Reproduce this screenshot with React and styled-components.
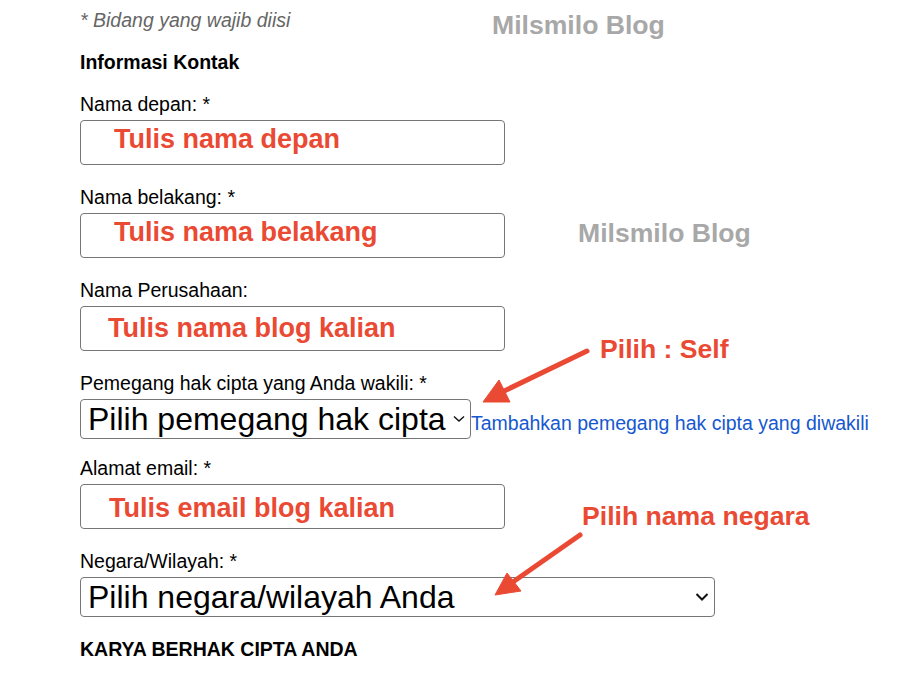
import styled, { createGlobalStyle } from 'styled-components';

const GlobalStyle = createGlobalStyle`
  body {
    margin: 0;
    background: #ffffff;
    font-family: "Liberation Sans", Arial, sans-serif;
    color: #000;
  }
`;

const Page = styled.div`
  position: relative;
  width: 923px;
  height: 678px;
  overflow: hidden;
  box-sizing: border-box;
  padding: 9px 0 0 80px;
`;

const Note = styled.p`
  margin: 0 0 20px;
  font-size: 19.5px;
  line-height: 22px;
  font-style: italic;
  color: #666;
`;

const SectionTitle = styled.h3`
  margin: 0 0 20px;
  font-size: 19.5px;
  line-height: 22px;
  font-weight: bold;
`;

const Field = styled.div`
  margin-bottom: ${(props) => props.gap || 21}px;
`;

const Label = styled.label`
  display: block;
  font-size: 19.5px;
  line-height: 22px;
  margin-bottom: 5px;
`;

// shift: vertical offset of the hand-written hint inside the box
const TextBox = styled.input`
  display: block;
  box-sizing: border-box;
  width: 425px;
  height: 45px;
  margin: 0;
  padding: ${(p) => Math.max(0, p.shift * 2)}px 0 ${(p) => Math.max(0, -p.shift * 2)}px ${(p) => p.indent}px;
  border: 1px solid #767676;
  border-radius: 4px;
  background: #fff;
  font-family: "Liberation Sans", Arial, sans-serif;
  font-size: 27px;
  font-weight: bold;
  color: #ea4a33;
  outline: none;
`;

const SelectRow = styled.div`
  display: flex;
  align-items: baseline;
`;

const SelectWrap = styled.div`
  position: relative;
  width: ${(props) => props.width}px;
`;

const Select = styled.select`
  appearance: none;
  -webkit-appearance: none;
  display: block;
  box-sizing: border-box;
  width: 100%;
  height: 40px;
  margin: 0;
  padding: 0 14px 0 7px;
  border: 1px solid #767676;
  border-radius: 4px;
  background: #fff;
  font-family: "Liberation Sans", Arial, sans-serif;
  font-size: 32px;
  color: #000;
`;

const Chevron = styled.svg`
  position: absolute;
  top: 50%;
  right: ${(props) => props.right}px;
  transform: translateY(-50%);
  pointer-events: none;
`;

const Link = styled.a`
  font-size: 19.5px;
  line-height: 22px;
  color: #1558cf;
  text-decoration: none;
  white-space: nowrap;
`;

const Callout = styled.span`
  position: absolute;
  left: ${(props) => props.x}px;
  top: ${(props) => props.y}px;
  font-size: 26.6px;
  line-height: 1;
  font-weight: bold;
  white-space: nowrap;
  color: ${(props) => (props.watermark ? '#a8a8a8' : '#ea4a33')};
`;

const Overlay = styled.svg`
  position: absolute;
  left: 0;
  top: 0;
  pointer-events: none;
`;

function SelectBox({ width, chevronRight, small, children }) {
  return (
    <SelectWrap width={width}>
      <Select defaultValue="">
        <option value="">{children}</option>
      </Select>
      {small ? (
        <Chevron width="12" height="7" viewBox="0 0 12 7" right={chevronRight}>
          <polyline points="1,1 6,5.5 11,1" fill="none" stroke="#111" strokeWidth="1.4" />
        </Chevron>
      ) : (
        <Chevron width="14" height="9" viewBox="0 0 14 9" right={chevronRight}>
          <polyline points="1.5,1.5 7,7 12.5,1.5" fill="none" stroke="#111" strokeWidth="2" />
        </Chevron>
      )}
    </SelectWrap>
  );
}

function App() {
  return (
    <>
      <GlobalStyle />
      <Page>
        <Note>* Bidang yang wajib diisi</Note>
        <SectionTitle>Informasi Kontak</SectionTitle>

        <Field>
          <Label>Nama depan: *</Label>
          <TextBox readOnly indent={33} shift={-3} value="Tulis nama depan" />
        </Field>
        <Field>
          <Label>Nama belakang: *</Label>
          <TextBox readOnly indent={33} shift={-3.5} value="Tulis nama belakang" />
        </Field>
        <Field>
          <Label>Nama Perusahaan:</Label>
          <TextBox readOnly indent={27} shift={0} value="Tulis nama blog kalian" />
        </Field>
        <Field gap={18}>
          <Label>Pemegang hak cipta yang Anda wakili: *</Label>
          <SelectRow>
            <SelectBox width={391} chevronRight={6} small>
              Pilih pemegang hak cipta
            </SelectBox>
            <Link href="#">Tambahkan pemegang hak cipta yang diwakili</Link>
          </SelectRow>
        </Field>
        <Field>
          <Label>Alamat email: *</Label>
          <TextBox readOnly indent={28} shift={1.5} value="Tulis email blog kalian" />
        </Field>
        <Field>
          <Label>Negara/Wilayah: *</Label>
          <SelectBox width={635} chevronRight={6}>
            Pilih negara/wilayah Anda
          </SelectBox>
        </Field>
        <SectionTitle>KARYA BERHAK CIPTA ANDA</SectionTitle>

        <Callout watermark x={492} y={12}>Milsmilo Blog</Callout>
        <Callout watermark x={578} y={220}>Milsmilo Blog</Callout>
        <Callout x={600} y={336}>Pilih : Self</Callout>
        <Callout x={582} y={503}>Pilih nama negara</Callout>

        <Overlay width="923" height="678" viewBox="0 0 923 678">
          <g fill="#ea4a33" stroke="#ea4a33">
            <line x1="587" y1="351" x2="500" y2="393" strokeWidth="5" strokeLinecap="round" />
            <polygon points="483,402 499,380 510,402" strokeWidth="1" />
            <line x1="580" y1="535" x2="510" y2="584" strokeWidth="5" strokeLinecap="round" />
            <polygon points="495,595 507,573 521,591" strokeWidth="1" />
          </g>
        </Overlay>
      </Page>
    </>
  );
}

export default App;
